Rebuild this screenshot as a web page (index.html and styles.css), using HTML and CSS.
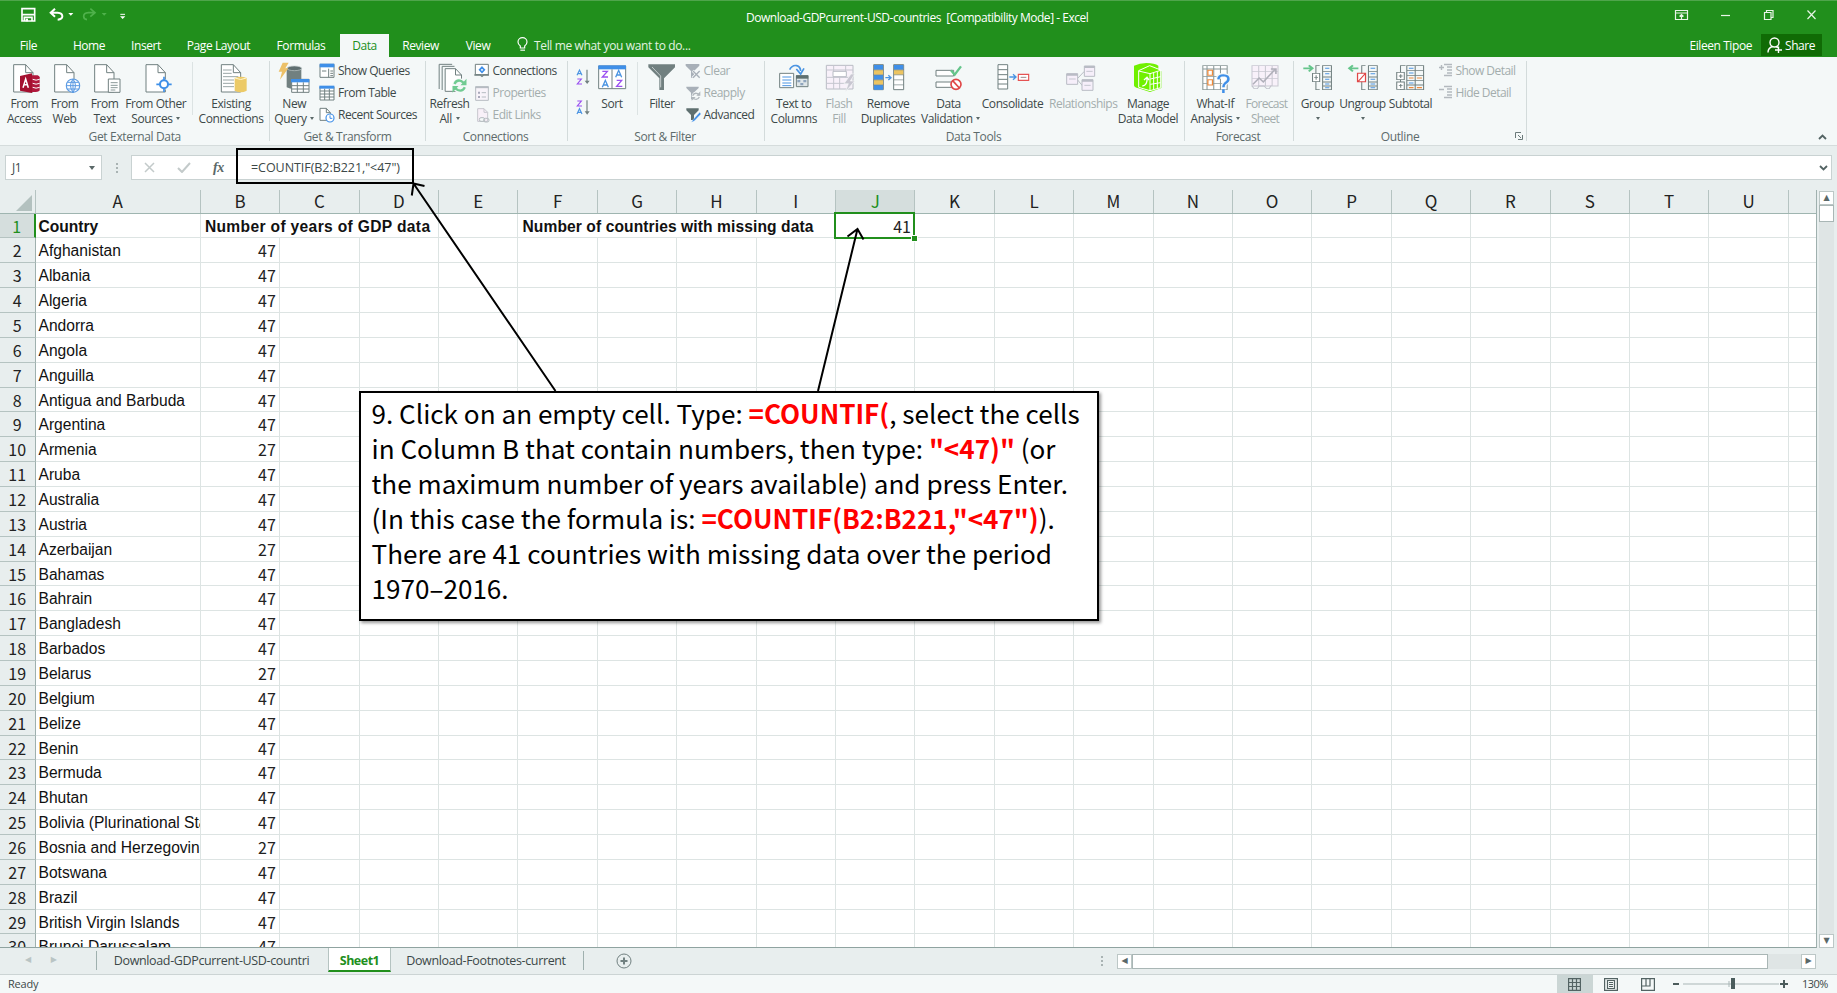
FILE: index.html
```html
<!DOCTYPE html>
<html lang="en">
<head>
<meta charset="utf-8">
<title>Download-GDPcurrent-USD-countries - Excel</title>
<link rel="stylesheet" href="styles.css">
</head>
<body>
<svg class="defs" width="0" height="0">
  <defs>
    <g id="page"><path d="M2 2H38L60 26V84H2Z" fill="#fff" stroke="#718080" stroke-width="3"/><path d="M38 2V26H60" fill="none" stroke="#718080" stroke-width="3"/></g>
  </defs>
</svg>
<div class="app">
  <header class="top">
    <div class="titlebar">
      <svg class="qat" width="112" height="32" viewBox="50 0 336 96">
        <path d="M65 26H103V63H65Z" fill="none" stroke="#fff" stroke-width="5"/><path d="M65 44H103M72 63V52H95V63" stroke="#fff" stroke-width="5" fill="none"/><path d="M76 56h7v8h-7z" fill="#fff"/>
        <path d="M164 26L151 38L164 50M152 38H172Q186 39 186 49Q186 58 172 59" fill="none" stroke="#fff" stroke-width="6"/><path d="M204 39h15l-7.500 8z" fill="#fff"/>
        <path d="M270 26L284 38L270 50M283 38H264Q250 39 250 49Q250 58 260 59" fill="none" stroke="#4fb14b" stroke-width="5"/><path d="M304 39h15l-7.500 8z" fill="#4fb14b"/>
        <path d="M360 43H374" stroke="#fff" stroke-width="3"/><path d="M359 49h16l-8 8z" fill="#fff"/>
      </svg>
      <div class="doc">Download-GDPcurrent-USD-countries&nbsp; [Compatibility Mode] - Excel</div>
      <svg class="win" width="150" height="30" viewBox="0 0 150 30" fill="none" stroke="#e9f5e8" stroke-width="1.200">
        <path d="M9.500 10.500h12v9h-12zM9.500 13h12M15.500 19v-4.500M13.500 16.500l2-2 2 2"/><path d="M55 15.500h9"/><path d="M98.500 12.500h6.500v7h-6.500zM100.500 12.500v-2h6.500v7h-2"/><path d="M143.500 10.500l8 8.500M151.500 10.500l-8 8.500" transform="translate(-2)"/>
      </svg>
    </div>
    <nav class="tabs">
      <span style="width:57px" class="tb file">File</span><span class="tb" style="width:64px">Home</span><span class="tb" style="width:50px">Insert</span><span class="tb" style="width:95px">Page Layout</span><span class="tb" style="width:70px">Formulas</span><span class="tb on">Data</span><span class="tb" style="width:65px">Review</span><span class="tb" style="width:50px">View</span>
      <svg class="bulb" width="12" height="15" viewBox="232 110 36 45" fill="none" stroke="#fff" stroke-width="3.500"><path d="M242 143V137Q235 132 235 125A13.500 13 0 0 1 262 125Q262 132 255 137V143Z"/><path d="M242 149.500H256"/></svg>
      <span class="tell">Tell me what you want to do...</span>
      <span class="user">Eileen Tipoe</span>
      <span class="share"><svg width="15" height="16" viewBox="0 0 15 16" fill="none" stroke="#fff" stroke-width="1.400"><circle cx="7.500" cy="5.500" r="4.500"/><path d="M5.500 9.500Q1 11 1 15.500M9 9.500l2 1M8 13h7M11.500 9.500v7"/></svg>Share</span>
    </nav>
  </header>

  <section class="ribbon">
    <div class="grp" style="width:269.500px">
      <div class="body" style="padding-left:4px">
        <div class="btn" style="width:40.500px"><svg class="ic" viewBox="18 186 108 93"><use href="#page" x="39" y="192"/><path d="M95 226h18q6 3 6 6v38q0 5-12 6H95z" fill="#b0183c"/><path d="M98 238q10 5 21 0M98 250q10 5 21 0M98 262q10 5 21 0" stroke="#fff" stroke-width="3" fill="none"/><path d="M60 228L96 220V279L60 272Z" fill="#a4102f"/><path d="M69 263L77 237L85 263M72 254H82" stroke="#fff" stroke-width="4.500" fill="none"/></svg>From<br>Access</div>
        <div class="btn" style="width:40px"><svg class="ic" viewBox="139 186 108 93"><use href="#page" x="160" y="192"/><circle cx="217" cy="257" r="20" fill="#fff" stroke="#5c9be3" stroke-width="3.500"/><path d="M217 237V277M198 257H236M201 247H233M201 267H233M217 237Q202 257 217 277M217 237Q232 257 217 277" fill="none" stroke="#5c9be3" stroke-width="3"/></svg>From<br>Web</div>
        <div class="btn" style="width:40px"><svg class="ic" viewBox="259 186 108 93"><use href="#page" x="280" y="192"/><path d="M323 237H358V277H323Z" fill="#fff" stroke="#718080" stroke-width="3"/><path d="M330 248H351M330 256H351M330 263H351M330 270H344" stroke="#8b9a9a" stroke-width="3"/></svg>From<br>Text</div>
        <div class="btn" style="width:62.500px"><svg class="ic" viewBox="413 186 108 93"><use href="#page" x="435" y="192"/><circle cx="491" cy="253" r="16" fill="#f4f8f8"/><circle cx="491" cy="253" r="12" fill="#fff" stroke="#3f8fe8" stroke-width="6"/><path d="M491 230V243M491 263V276M468 253H481M501 253H514" stroke="#3f8fe8" stroke-width="5"/></svg>From Other<br>Sources <i class="dd"></i></div>
        <i class="sep" style="margin:0 0 0 4.500px"></i>
        <div class="btn" style="width:77px"><svg class="ic" viewBox="637 186 108 93"><use href="#page" x="660" y="192"/><path d="M667 210H693M667 220H693M667 230H713M667 240H700M667 250H700M667 260H700" stroke="#9aa7a7" stroke-width="3"/><path d="M702 234Q720 226 738 234V272Q720 282 702 272Z" fill="#ecca67"/><path d="M703 234Q720 243 737 234" fill="none" stroke="#fff5cf" stroke-width="3"/></svg>Existing<br>Connections</div>
      </div>
      <div class="cap">Get External Data</div>
    </div>
    <div class="grp" style="width:156px">
      <div class="body">
        <div class="btn" style="width:49.500px"><svg class="ic" viewBox="830 186 108 93"><path d="M862 205V262Q882 272 906 262V205Z" fill="#718080"/><ellipse cx="885" cy="205" rx="22" ry="7" fill="#5f6f70" stroke="#c3cccc" stroke-width="2"/><path d="M850 188H868L858 205H867L842 239L848 215H838Z" fill="#ecc067"/><path d="M877 238H929V277H877Z" fill="#fff" stroke="#718080" stroke-width="3"/><path d="M875 237H930V247H875Z" fill="#3f8fe8"/><path d="M877 257H929M877 267H929M894 247V277M912 247V277" stroke="#718080" stroke-width="3"/></svg>New<br>Query <i class="dd"></i></div>
        <div class="list">
          <div class="it"><svg class="sm" viewBox="958 186 48 48"><path d="M961 190H1003V229H961Z" fill="#fff" stroke="#718080" stroke-width="3"/><path d="M960 188H1004V199H960Z" fill="#3f8fe8"/><path d="M987 203V229M967 210H980M992 210H1000M992 217H1000M992 224H1000" stroke="#718080" stroke-width="3"/></svg>Show Queries</div>
          <div class="it"><svg class="sm" viewBox="958 252 48 48"><path d="M961 257H1003V297H961Z" fill="#fff" stroke="#718080" stroke-width="3"/><path d="M961 270H1003M961 279H1003M961 288H1003M975 263V297M989 263V297" stroke="#718080" stroke-width="3"/><path d="M959 254H1004V263H959Z" fill="#3f8fe8"/></svg>From Table</div>
          <div class="it"><svg class="sm" viewBox="958 318 48 48"><path d="M961 322H980L992 335V358H961Z" fill="#fff" stroke="#718080" stroke-width="3"/><path d="M980 322V335H992" fill="none" stroke="#718080" stroke-width="3"/><circle cx="991" cy="351" r="12" fill="#fff" stroke="#3f8fe8" stroke-width="3.500"/><path d="M991 343V352H998" fill="none" stroke="#3f8fe8" stroke-width="3"/></svg>Recent Sources</div>
        </div>
      </div>
      <div class="cap">Get &amp; Transform</div>
    </div>
    <div class="grp" style="width:142px">
      <div class="body">
        <div class="btn" style="width:48px"><svg class="ic" viewBox="-25.500 186 108 93"><path d="M-4 267V193H35M5 270V199H42" fill="none" stroke="#718080" stroke-width="3"/><path d="M14 206H45L63 225V274H14Z" fill="#fff" stroke="#718080" stroke-width="3"/><path d="M45 206V225H63" fill="none" stroke="#718080" stroke-width="3"/><circle cx="57" cy="257" r="22" fill="#f4f8f8"/><path d="M42 252Q48 238 62 243L72 250M73 262Q66 276 52 270L42 264" fill="none" stroke="#71cb92" stroke-width="7"/><path d="M78 236V256H60ZM36 278V258H54Z" fill="#71cb92"/></svg>Refresh<br>All <i class="dd"></i></div>
        <div class="list">
          <div class="it"><svg class="sm" viewBox="102 186 48 48"><path d="M106 190H145V221H106Z" fill="#fff" stroke="#718080" stroke-width="3"/><path d="M103 222H121L126 226L131 222H147" fill="none" stroke="#718080" stroke-width="4"/><path d="M126 199L133 206.500L126 214L119 206.500Z" fill="none" stroke="#3f8fe8" stroke-width="5"/></svg>Connections</div>
          <div class="it off"><svg class="sm" viewBox="102 252 48 48"><path d="M107 257H145V298H107Z" fill="#f8f4fa" stroke="#b6bcc2" stroke-width="3"/><path d="M106 259H146" stroke="#b6bcc2" stroke-width="5"/><path d="M114 272h6v6h-6zM114 285h6v6h-6z" fill="#a9a9bb"/><path d="M125 275H138M125 288H138" stroke="#b6bcc2" stroke-width="3"/></svg>Properties</div>
          <div class="it off"><svg class="sm" viewBox="102 318 48 48"><path d="M113 323H132L143 334V361H113Z" fill="#f8f0f8" stroke="#c6c6ce" stroke-width="3"/><path d="M132 323V334H143" fill="none" stroke="#c6c6ce" stroke-width="3"/><rect x="118" y="350" width="16" height="11" rx="5" fill="#f4f8f8" stroke="#b5bcc0" stroke-width="3"/><rect x="131" y="352" width="16" height="11" rx="5" fill="none" stroke="#b5bcc0" stroke-width="3"/></svg>Edit Links</div>
        </div>
      </div>
      <div class="cap plain">Connections</div>
    </div>
    <div class="grp" style="width:197px">
      <div class="body">
        <div class="az"><svg width="16" height="60" viewBox="408 186 48 180"><g fill="none" stroke-width="3.500"><path d="M411 226L418.500 210L426 226M413 221H424M411 342L418.500 326L426 342M413 337H424" stroke="#4b94e2"/><path d="M412 237H424L412 252H426M412 303H424L412 318H426" stroke="#9a50f0"/><path d="M441 209V246M441 301V338" stroke="#718080"/></g><path d="M434 242H449L441.500 252ZM434 334H449L441.500 344Z" fill="#718080"/></svg></div>
        <div class="btn" style="width:35px"><svg class="ic" viewBox="464 186 108 93"><path d="M478 198H559V266H478Z" fill="#fff" stroke="#718080" stroke-width="3"/><path d="M477 196H560V208H477Z" fill="#3f8fe8"/><path d="M518 208V266" stroke="#718080" stroke-width="3"/><g fill="none" stroke-width="4"><path d="M489 214H504L489 231H506M532 241H547L532 259H549" stroke="#9a50f0"/><path d="M489 262L498 241L507 262M492 255H504M529 232L538 211L547 232M532 225H544" stroke="#4b94e2"/></g></svg>Sort</div>
        <i class="sep" style="margin:0 2px 0 7px"></i>
        <div class="btn" style="width:45px"><svg class="ic" viewBox="612 186 108 93"><path d="M625 193H705V202L672 235V270H658V235L625 202Z" fill="#718080"/><path d="M636 201L662 228V262" fill="none" stroke="#c4cccc" stroke-width="3"/></svg>Filter</div>
        <div class="list">
          <div class="it off"><svg class="sm" viewBox="734 186 48 48"><path d="M736 189H777V194L761 210V230H752V210L736 194Z" fill="#a8b0b8"/><path d="M757 209L779 230M779 209L757 230" stroke="#f4f8f8" stroke-width="8"/><path d="M758 210L778 230M778 210L758 230" stroke="#a8b0b8" stroke-width="4"/></svg>Clear</div>
          <div class="it off"><svg class="sm" viewBox="734 252 48 48"><path d="M738 257H775V261L760 275V295H752V275L738 261Z" fill="#a8b0b8"/><circle cx="767" cy="285" r="13" fill="#f4f8f8"/><path d="M757 284Q761 274 772 278L777 283M777 288Q772 298 762 294L758 290" fill="none" stroke="#b0b7bc" stroke-width="4"/><path d="M780 271V284H768ZM754 299V288H766Z" fill="#b0b7bc"/></svg>Reapply</div>
          <div class="it"><svg class="sm" viewBox="734 318 48 48"><path d="M738 322H775V328L761 342V357H752V342L738 328Z" fill="#5f7070"/><path d="M778 334L758 356L753 364L762 360L782 339Z" fill="#3f8fe8" stroke="#f4f8f8" stroke-width="1"/></svg>Advanced</div>
        </div>
      </div>
      <div class="cap plain">Sort &amp; Filter</div>
    </div>
    <div class="grp" style="width:420px">
      <div class="body">
        <div class="btn" style="width:58.500px"><svg class="ic" viewBox="108 186 108 93"><path d="M119 220H161V263H119Z" fill="#fff" stroke="#718080" stroke-width="3"/><path d="M127 231H154M127 240H154M127 249H154M127 257H154" stroke="#4b94e2" stroke-width="3"/><path d="M169 227H204V260H169Z" fill="#dfe6e8" stroke="#718080" stroke-width="3"/><path d="M168 226H205V236H168Z" fill="#5f7070"/><path d="M172 240h9v7h-9zM190 240h9v7h-9zM181 249h9v7h-9z" fill="#8fa5bd"/><path d="M149 209Q157 194 170 197Q181 200 182 213" fill="none" stroke="#4b94e2" stroke-width="5"/><path d="M169 207L182 222L192 205" fill="none" stroke="#4b94e2" stroke-width="5"/></svg>Text to<br>Columns</div>
        <div class="btn off" style="width:32px"><svg class="ic" viewBox="244 186 108 93"><path d="M260 196H340V267H260Z" fill="#f8f1fa" stroke="#b9bcc5" stroke-width="3"/><path d="M260 210H340M260 232H340M260 250H330M282 196V267M318 196V232M300 232V267" fill="none" stroke="#c5c6cf" stroke-width="3"/><path d="M280 214H320V230H280Z" fill="#fff" stroke="#b9bcc5" stroke-width="3"/><path d="M334 222L313 251H326L317 276L345 243H332L345 222Z" fill="#c9c7d2" stroke="#f4f8f8" stroke-width="2"/></svg>Flash<br>Fill</div>
        <div class="btn" style="width:66px"><svg class="ic" viewBox="390 186 108 93"><path d="M401 194H430V269H401ZM461 194H491V269H461Z" fill="#fff" stroke="#718080" stroke-width="3"/><path d="M402 195h27v14h-27zM402 225h27v14h-27zM402 255h27v14h-27zM462 195h28v14h-28z" fill="#3f8fe8"/><path d="M402 210h27v14h-27zM402 240h27v14h-27zM462 210h28v14h-28z" fill="#ecc461"/><path d="M400 209.500h30M400 224.500h30M400 239.500h30M400 254.500h30M461 209.500h30M461 224.500h30M461 239.500h30M461 254.500h30" stroke="#718080" stroke-width="2"/><path d="M436 233H452M445 226L453 233L445 240" fill="none" stroke="#4b94e2" stroke-width="4"/></svg>Remove<br>Duplicates</div>
        <div class="btn" style="width:55px"><svg class="ic" viewBox="572 186 108 93"><path d="M587 211H640V228H587ZM587 246H640V262H587Z" fill="#fff" stroke="#718080" stroke-width="3"/><path d="M632 211L643 224L662 199" fill="none" stroke="#65c58b" stroke-width="7"/><circle cx="647" cy="253" r="15" fill="#fff" stroke="#e04747" stroke-width="5"/><path d="M637 242L657 264" stroke="#e04747" stroke-width="5"/></svg>Data<br>Validation <i class="dd"></i></div>
        <div class="btn" style="width:73px"><svg class="ic" viewBox="764 186 108 93"><path d="M773 194H802V267H773ZM773 209H802M773 224H802M773 238H802M773 252H802" fill="#fff" stroke="#718080" stroke-width="3"/><path d="M807 231H826M818 223L827 231L818 239" fill="none" stroke="#4b94e2" stroke-width="4"/><path d="M834 223H865V241H834Z" fill="#fff" stroke="#e55353" stroke-width="3.500"/><path d="M841 232H858" stroke="#9a8b8b" stroke-width="3"/></svg>Consolidate</div>
        <div class="btn off rel" style="width:64px"><svg class="ic" viewBox="969 186 108 93"><path d="M1013 235L1033 214M1013 240L1028 258" stroke="#b9bcc5" stroke-width="3"/><path d="M980 221H1013V253H980ZM1033 198H1064V229H1033ZM1026 239H1059V271H1026Z" fill="#f6effa" stroke="#b9bcc5" stroke-width="3"/><path d="M980 224H1013M1033 201H1064M1026 242H1059" stroke="#b9bcc5" stroke-width="6"/><path d="M987 237H1007M1039 214H1058M1033 256H1052" stroke="#c5c6cf" stroke-width="3"/></svg>Relationships</div>
        <div class="btn" style="width:70px"><svg class="ic" viewBox="1171 186 108 93"><path d="M1183 197Q1200 189 1220 189Q1245 189 1256 197V208L1265 214V264L1231 276L1196 265Q1183 262 1183 256Z" fill="#70f000"/><path d="M1197 212L1230 197L1263 210V263L1231 272L1197 262ZM1197 213L1231 221L1263 211M1231 221V272M1242 219V269M1253 215V266M1232 237L1263 230M1232 253L1263 248" fill="none" stroke="#fff" stroke-width="3"/><path d="M1208 258Q1224 256 1222 233M1213 240L1222 232L1228 240" fill="none" stroke="#fff" stroke-width="4"/></svg>Manage<br>Data Model</div>
      </div>
      <div class="cap plain">Data Tools</div>
    </div>
    <div class="grp" style="width:109px">
      <div class="body">
        <div class="btn" style="width:61.500px"><svg class="ic" preserveAspectRatio="none" viewBox="42.100 186 85.800 93"><path d="M56 197H114V269H56ZM56 207H114M56 230H114M56 250H114M66 197V269M82 197V269M98 197V269" fill="#fff" stroke="#8a9898" stroke-width="2.500"/><path d="M68 211H79V226H68ZM68 239H79V255H68Z" fill="#fff" stroke="#ee8a3c" stroke-width="3"/><path d="M93 236Q94 225 105 225Q117 226 117 236Q117 244 109 250Q105 254 105 263M105 269V279" fill="none" stroke="#f4f8f8" stroke-width="12"/><path d="M93 238Q94 226 105 226Q117 227 117 237Q117 244 109 250Q105 254 105 262M105 268V279" fill="none" stroke="#3f8fe8" stroke-width="6"/></svg>What-If<br>Analysis <i class="dd"></i></div>
        <div class="btn off fc" style="width:39px"><svg class="ic" preserveAspectRatio="none" viewBox="161.100 186 85.800 93"><path d="M173 197H235V258H173ZM173 215H235M173 235H235M189 197V258M205 197V258M221 197V258" fill="#f8f1fa" stroke="#c9c9d2" stroke-width="2.500"/><path d="M175 253L190 234L200 246L228 208M218 207H230V222" fill="none" stroke="#b0b0ba" stroke-width="4"/><path d="M173 258L178 266H186L190 258H202L208 266H214L219 256" fill="none" stroke="#c0c0ca" stroke-width="2.500"/></svg>Forecast<br>Sheet</div>
      </div>
      <div class="cap plain">Forecast</div>
    </div>
    <div class="grp last" style="width:233px">
      <div class="body" style="padding-left:4px">
        <div class="btn" style="width:40px"><svg class="ic" preserveAspectRatio="none" viewBox="285.100 186 85.800 93"><path d="M293 205H314M306 196L315 205L306 214" fill="none" stroke="#65c58b" stroke-width="5"/><path d="M332 197H323V269H332M339 197H360V269H339ZM339 214H360M339 231H360M339 246H360M339 258H360" fill="none" stroke="#718080" stroke-width="2.500"/><path d="M315 220H332V245H315Z" fill="#fff" stroke="#718080" stroke-width="2.500"/><path d="M319 232H328M323.500 226V239" stroke="#718080" stroke-width="2.500"/><path d="M345 205H355M345 221H355M345 238H355M345 252H355M345 263H355" stroke="#4b94e2" stroke-width="3"/></svg>Group<br><i class="dd"></i></div>
        <div class="btn" style="width:50px"><svg class="ic" preserveAspectRatio="none" viewBox="393.100 186 85.800 93"><path d="M425 205H404M412 196L403 205L412 214" fill="none" stroke="#65c58b" stroke-width="5"/><path d="M442 197H433V269H442M449 197H470V269H449ZM449 214H470M449 231H470M449 246H470M449 258H470" fill="none" stroke="#718080" stroke-width="2.500"/><path d="M423 220H442V245H423ZM425 244L441 221" fill="#fff" stroke="#e04747" stroke-width="3"/><path d="M454 205H465M454 221H465M454 238H465M454 252H465M454 263H465" stroke="#4b94e2" stroke-width="3"/></svg>Ungroup<br><i class="dd"></i></div>
        <div class="btn" style="width:46px"><svg class="ic" preserveAspectRatio="none" viewBox="508.100 186 85.800 93"><path d="M538 197H526V269H538M541 197H581V269H541ZM541 211H581M541 226H581M541 241H581M541 255H581M561 197V269" fill="none" stroke="#718080" stroke-width="2.500"/><path d="M517 217H535V239H517ZM517 246H535V268H517Z" fill="#fff" stroke="#718080" stroke-width="2.500"/><path d="M522 228H531M526.500 223V234M522 257H531M526.500 252V263" stroke="#718080" stroke-width="2.500"/><path d="M546 205H557M546 219H557M546 249H557" stroke="#4b94e2" stroke-width="3"/><path d="M546 234H557M565 234H577M546 263H557M565 263H577" stroke="#ee8a3c" stroke-width="3.500"/></svg>Subtotal</div>
        <div class="list out">
          <div class="it off"><svg class="sm" viewBox="0 0 16 16" fill="none" stroke="#b3b9be" stroke-width="1.400"><path d="M1 4.500h5M3.500 2v5M6 1.500h8M9 4h5M9 7h5M9 10h5M6 12.500h8"/></svg>Show Detail</div>
          <div class="it off"><svg class="sm" viewBox="0 0 16 16" fill="none" stroke="#b3b9be" stroke-width="1.400"><path d="M1 4.500h5M6 1.500h8M9 4h5M9 7h5M9 10h5M6 12.500h8"/></svg>Hide Detail</div>
        </div>
      </div>
      <div class="cap outcap">Outline<svg class="launch" width="8" height="8" viewBox="0 0 8 8" fill="none" stroke="#6b7a7a"><path d="M.5 6V.5H6M3 3l3 3M7.500 3v4.500H3"/></svg></div>
    </div>
    <svg class="fold" width="9" height="6" viewBox="0 0 9 6" fill="none" stroke="#536363" stroke-width="1.800"><path d="M1 5l3.500-3.500L8 5"/></svg>
  </section>

  <section class="fbar">
    <div class="name">J1<i class="dd big"></i></div>
    <div class="grip"><i></i><i></i><i></i></div>
    <div class="fx"><svg width="11" height="11" viewBox="0 0 11 11" stroke="#c3caca" stroke-width="1.500"><path d="M1 1l9 9M10 1l-9 9"/></svg><svg width="14" height="11" viewBox="0 0 14 11" fill="none" stroke="#c3caca" stroke-width="2"><path d="M1 6l4 4L13 1"/></svg><span><i>f</i>x</span></div>
    <div class="formula">=COUNTIF(B2:B221,"&lt;47")<svg width="9" height="6" viewBox="0 0 9 6" fill="none" stroke="#536363" stroke-width="1.800"><path d="M1 1l3.500 3.500L8 1"/></svg></div>
  </section>

  <main class="work">
    <div class="sheet">
      <div class="heads" id="heads"></div>
      <div class="rows" id="rows"></div>
    </div>
    <div class="vs"><span class="sb">▲</span><span class="th"></span><span class="tr"></span><span class="sb">▼</span></div>
  </main>

  <section class="stabs">
    <div class="navs"><i>◀</i><i>▶</i></div>
    <div class="st first">Download-GDPcurrent-USD-countri</div>
    <div class="st cur">Sheet1</div>
    <div class="st foot">Download-Footnotes-current</div>
    <svg class="plus" width="16" height="16" viewBox="0 0 16 16" fill="none" stroke="#718080"><circle cx="8" cy="8" r="7"/><path d="M4.500 8h7M8 4.500v7" stroke-width="2"/></svg>
    <div class="grip hg"><i></i><i></i><i></i></div>
    <div class="hs"><span class="sb">◀</span><span class="hth"></span><span class="htr"></span><span class="sb">▶</span></div>
  </section>
  <footer class="status">
    <span class="ready">Ready</span>
    <span class="vw act"><svg width="13" height="13" viewBox="0 0 13 13" fill="none" stroke="#536363" stroke-width="1.200"><path d="M.6.600h11.800v11.800H.6zM.6 4.500h12M.6 8.500h12M4.500.500v12M8.500.500v12"/></svg></span>
    <span class="vw"><svg width="14" height="13" viewBox="0 0 14 13" fill="none" stroke="#536363" stroke-width="1.200"><path d="M.6.600h12.800v11.800H.6zM3.500 2.500h7v8h-7zM5 4.500h4M5 6.500h4M5 8.500h4"/></svg></span>
    <span class="vw"><svg width="14" height="13" viewBox="0 0 14 13" fill="none" stroke="#536363" stroke-width="1.200"><path d="M.6.600h12.800v11.800H.6zM.6 8H9V.600M5 .600V8"/></svg></span>
    <svg class="zoom" width="118" height="18" viewBox="0 0 118 18"><path d="M3 9h6M110 9h8M114 5v8" stroke="#4b5c5c" stroke-width="2"/><path d="M13 9H109M59 6v6" stroke="#a9b6b6"/><path d="M61 3h4v11h-4z" fill="#4b5c5c"/></svg>
    <span class="pct">130%</span>
  </footer>

  <div class="mark"></div>
  <svg class="arrows" width="1837" height="993" viewBox="0 0 1837 993" fill="none" stroke="#000" stroke-width="2"><path d="M555.500 391L413.500 183.500M424.500 186L413.500 183.500L411.800 195.500M818 391L857.500 229M847.500 236.500L857.500 229L863.500 239.500"/></svg>
  <div class="note">9. Click on an empty cell. Type: <b>=COUNTIF(</b>, select the cells<br>in Column B that contain numbers, then type: <b>"&lt;47)"</b> (or<br>the maximum number of years available) and press Enter.<br>(In this case the formula is: <b>=COUNTIF(B2:B221,"&lt;47")</b>).<br>There are 41 countries with missing data over the period<br>1970–2016.</div>
</div>
<script src="sheet.js"></script>
</body>
</html>
```
FILE: styles.css
```css
* { box-sizing: border-box; }
body { margin: 0; background: #e8eeee; font: 12px/16px "Open Sans", sans-serif; letter-spacing: -0.42px; color: #3c4848; }
.app { position: relative; width: 1837px; height: 993px; overflow: hidden; display: flex; flex-direction: column; }
.defs { position: absolute; }
svg { flex: none; display: block; }

.top { background: #218f1c; height: 57px; border-top: 1px solid #4fa54b; color: #fff; flex: none; }
.titlebar { height: 33px; display: flex; }
.qat { margin: -1px 0 0 17px; }
.doc { width: 342px; margin: 9px 0 0 617px; white-space: nowrap; letter-spacing: -.48px; }
.win { margin: -1px 21px 0 auto; width: 150px; }
.tabs { display: flex; height: 23px; line-height: 23px; }
.tb { text-align: center; flex: none; white-space: nowrap; }
.tb.on { width: 49px; margin-left: 4px; margin-right: -1px; background: #f4f8f8; color: #218f1c; }
.bulb { margin: 3px 0 0 14px; }
.tell { margin-left: 5px; letter-spacing: -.36px; color: #e3f3e2; }
.user { margin-left: auto; margin-right: 9px; }
.share { width: 61px; height: 22px; background: #106b05; margin-right: 15px; display: flex; align-items: center; gap: 3px; padding-left: 6px; }

.ribbon { height: 89px; flex: none; background: #f4f8f8; border-bottom: 1px solid #d5dcdc; display: flex; }
.grp { position: relative; flex: none; height: 89px; display: flex; flex-direction: column; }
.grp::after { content: ""; position: absolute; right: 0; top: 4px; width: 1px; height: 80px; background: #d3dbdb; }
.body { display: flex; height: 71px; padding-top: 5px; }
.btn { flex: none; text-align: center; white-space: nowrap; line-height: 15.500px; }
.btn .ic { width: 36px; height: 31px; margin-bottom: 2.500px; position: relative; left: 50%; transform: translateX(-50%); }
.off { color: #a3adad; }
.rel { letter-spacing: -.5px; }
.fc { letter-spacing: -.7px; position: relative; left: -.5px; }
.dd { display: inline-block; border: 2.500px solid transparent; border-top: 3px solid #5a6868; border-bottom: 0; vertical-align: 3px; margin-left: 1px; }
.sep { width: 1px; height: 53px; background: #dce3e3; flex: none; }
.list { display: flex; flex-direction: column; margin-top: -2px; letter-spacing: -.48px; }
.it { display: flex; height: 22px; align-items: center; gap: 3px; white-space: nowrap; }
.sm { width: 16px; height: 16px; }
.out { margin-left: 4px; letter-spacing: -.55px; }
.out .it { gap: 2px; }
.az { width: 27px; padding: 0 0 0 8px; }
.cap { text-align: center; line-height: 19px; color: #5d6b6b; letter-spacing: -.35px; }
.cap.plain { padding-right: 2px; }
.outcap { padding-right: 20px; position: relative; }
.launch { position: absolute; right: 4px; top: 5px; }
.fold { margin: 77px 10px 0 auto; }

.fbar { height: 44px; flex: none; display: flex; padding: 9px 5px 0; }
.fbar > div { height: 25px; }
.name, .fx, .formula { background: #fff; border: 1px solid #c9d2d2; }
.name { width: 97px; padding: 3px 6px; display: flex; justify-content: space-between; align-items: center; }
.big { border-width: 4px 3.500px 0; border-top: 4px solid #5a6868; }
.grip { display: flex; flex-direction: column; gap: 2px; justify-content: center; width: 29px; align-items: center; }
.grip i { width: 2px; height: 2px; background: #a9b3b3; }
.fx { width: 106px; display: flex; align-items: center; padding-left: 12px; gap: 22px; }
.fx span { font: italic bold 14px "Liberation Serif", serif; color: #5a6868; }
.formula { flex: 1; display: flex; align-items: center; justify-content: space-between; padding: 0 3px 0 13px; font-size: 12.500px; letter-spacing: -.05px; }

.work { display: flex; height: 757.500px; flex: none; }
.sheet { width: 1817px; overflow: hidden; border-right: 1px solid #9fb0ae; border-bottom: 1px solid #8fa3a0; height: 757.500px; flex: none; }
.heads { display: flex; height: 23.500px; border-bottom: 1px solid #9fb5b0; font: 17px/22px "Noto Sans CJK SC", sans-serif; letter-spacing: 0; color: #222; width: 1900px; }
.heads span { flex: none; width: 79.400px; text-align: center; border-right: 1px solid #b5c3c1; }
.heads .corner { width: 35.500px; position: relative; }
.corner::after { content: ""; position: absolute; right: 3px; top: 5px; border-left: 16px solid transparent; border-bottom: 16px solid #b3c1bf; }
.heads .ca { width: 165.400px; }
.heads .sel { background: #d5dedd; color: #218f1c; }
.rows { background: #fff; width: 1900px; }
.row { display: flex; height: 24.860px; }
.row > * { flex: none; width: 79.400px; border-right: 1px solid #dde4e3; border-bottom: 1px solid #dde4e3; }
.row .rn { width: 35.500px; background: #e8eeee; border-right: 1px solid #9fb0ae; border-bottom-color: #b5c3c1; text-align: center; font: 16px/24px "Noto Sans CJK SC", sans-serif; letter-spacing: 0; color: #222; }
.row .ct { width: 165.400px; font: 15.600px/25px "Liberation Sans", sans-serif; letter-spacing: 0; white-space: nowrap; overflow: hidden; padding-left: 3px; color: #111; }
.row .yr { font: 16px/24px "Noto Sans CJK SC", sans-serif; letter-spacing: 0; text-align: right; padding-right: 3.500px; color: #222; }
.row .rn.sel { background: #d5dedd; color: #218f1c; border-right: 2px solid #218f1c; }
.row .hd { font-weight: bold; font-size: 15.600px; }
.row .w3 { width: 238.200px; letter-spacing: .34px; padding-left: 4px; }
.row .w4 { width: 317.600px; letter-spacing: .09px; padding-left: 4px; }
.row .act1 { position: relative; }
.act1::before { content: ""; position: absolute; inset: -2px -1px -2px -2px; border: 2px solid #218f1c; }
.act1::after { content: ""; position: absolute; right: -3px; bottom: -4px; width: 5px; height: 5px; background: #218f1c; box-shadow: 0 0 0 1px #fff; }
.vs { margin: 1px 0 0 2px; width: 15px; display: flex; flex-direction: column; }
.sb { width: 15px; height: 14px; border: 1px solid #bcc7c6; background: #fff; font: 8px/12px "DejaVu Sans", sans-serif; letter-spacing: 0; text-align: center; color: #5a6868; flex: none; }
.th { height: 17px; background: #fff; border: 1px solid #a9b6b5; }
.tr { flex: 1; background: #dfe5e5; }

.stabs { height: 27px; flex: none; display: flex; border-bottom: 1px solid #ccd4d4; font-size: 12.500px; letter-spacing: -.36px; line-height: 25px; }
.navs { width: 97px; height: 19px; margin-top: 3px; border-right: 1px solid #9fb0ae; padding-left: 25px; display: flex; gap: 20px; font: 8px/18px "DejaVu Sans", sans-serif; color: #b9c4c4; }
.navs i { font-style: normal; }
.st { white-space: nowrap; text-align: center; }
.first { width: 231px; padding-right: 2px; }
.cur { width: 63px; height: 24px; background: #fff; border-bottom: 2px solid #218f1c; color: #218f1c; font-weight: bold; letter-spacing: -.5px; border-left: 1px solid #b5c3c1; border-right: 1px solid #b5c3c1; }
.foot { width: 193px; height: 19px; margin-top: 3px; line-height: 19px; border-right: 1px solid #9fb0ae; padding-right: 2px; }
.plus { margin: 5px 0 0 32px; }
.hg { margin-left: auto; width: 30px; }
.hs { display: flex; width: 699px; margin: 6px 21px 0 0; height: 15px; }
.hs .sb { height: 15px; }
.hth { flex: 1; background: #fff; border: 1px solid #a9b6b5; }
.htr { width: 33px; background: #dfe5e5; }

.status { flex: 1; background: #f4f8f8; display: flex; align-items: center; font-size: 11px; letter-spacing: -.2px; }
.ready { margin-left: 8px; margin-right: auto; }
.vw { width: 36.500px; height: 19px; display: flex; align-items: center; justify-content: center; }
.vw.act { background: #cbd6d5; }
.zoom { margin-left: 4px; }
.pct { width: 35px; margin-left: 14px; letter-spacing: -.5px; }

.mark { position: absolute; left: 236px; top: 148px; width: 178px; height: 36px; border: 2px solid #000; }
.arrows { position: absolute; left: 0; top: 0; }
.note { position: absolute; left: 359px; top: 391px; width: 740px; height: 230px; background: #fff; border: 2px solid #000; box-shadow: 2px 2px 3px rgba(0,0,0,.4); padding: 3px 0 0 10.500px; font: 26.100px/35px "Noto Sans CJK SC", sans-serif; letter-spacing: 0; color: #000; white-space: nowrap; }
.note b { color: #f00; }
```
FILE: sheet.js
```js
const countries = ["Afghanistan", "Albania", "Algeria", "Andorra", "Angola", "Anguilla", "Antigua and Barbuda", "Argentina", "Armenia", "Aruba", "Australia", "Austria", "Azerbaijan", "Bahamas", "Bahrain", "Bangladesh", "Barbados", "Belarus", "Belgium", "Belize", "Benin", "Bermuda", "Bhutan", "Bolivia (Plurinational State of)", "Bosnia and Herzegovina", "Botswana", "Brazil", "British Virgin Islands", "Brunei Darussalam"];
const short = ["Armenia", "Azerbaijan", "Belarus", "Bosnia and Herzegovina"];

document.getElementById("heads").innerHTML = '<span class="corner"></span>' +
  [..."ABCDEFGHIJKLMNOPQRSTU"].map(c => `<span class="${c === "A" ? "ca" : c === "J" ? "sel" : ""}">${c}</span>`).join("");

const blanks = n => "<span></span>".repeat(n);
let html = `<div class="row"><span class="rn sel">1</span><span class="ct hd">Country</span><span class="ct hd w3">Number of years of GDP data</span>${blanks(1)}<span class="ct hd w4">Number of countries with missing data</span><span class="yr act1">41</span>${blanks(12)}</div>`;
countries.forEach((c, i) => {
  html += `<div class="row"><span class="rn">${i + 2}</span><span class="ct">${c}</span><span class="yr">${short.includes(c) ? 27 : 47}</span>${blanks(20)}</div>`;
});
document.getElementById("rows").innerHTML = html;
```
